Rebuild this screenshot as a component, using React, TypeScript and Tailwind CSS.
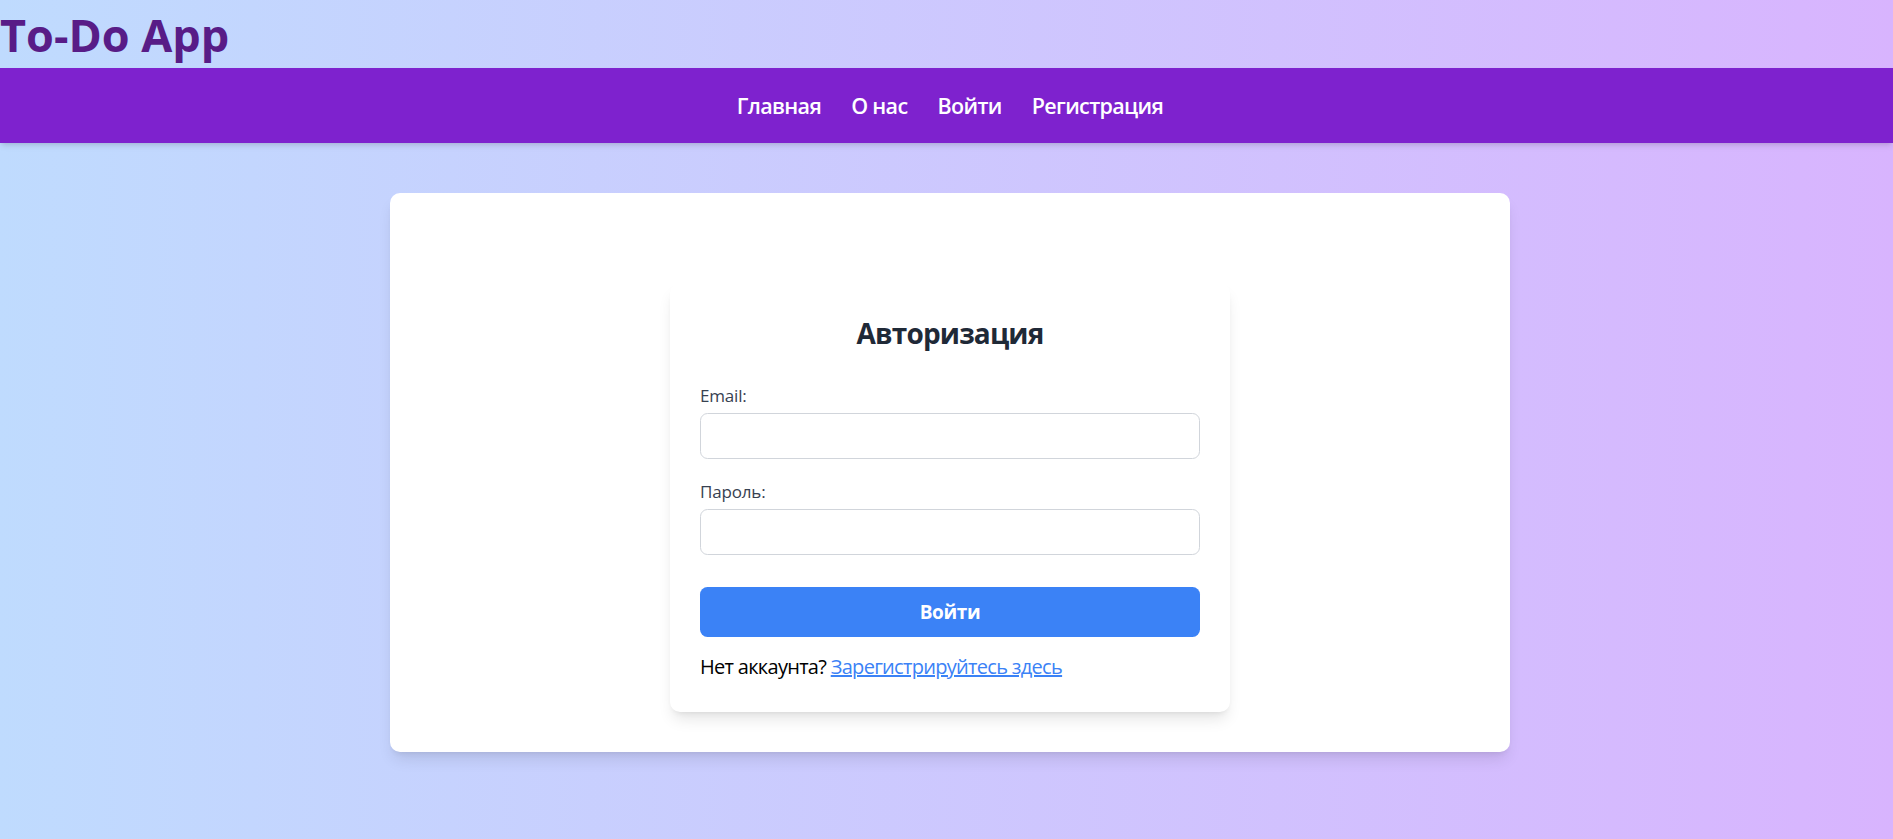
import React from 'react';

const font = { fontFamily: '"Open Sans", "Noto Sans", sans-serif' };

function NavBar() {
  const links = ['Главная', 'О нас', 'Войти', 'Регистрация'];
  return (
    <nav className="bg-[#7e22ce] shadow-md py-[20px] pl-[7px]">
      <ul className="flex justify-center gap-x-[30px]">
        {links.map((l) => (
          <li key={l}>
            <a href="#" className="text-white font-semibold text-[21.5px] tracking-[-0.03em] leading-[35px]">
              {l}
            </a>
          </li>
        ))}
      </ul>
    </nav>
  );
}

function LoginForm() {
  return (
    <div className="w-[560px] mx-auto bg-white rounded-[10px] shadow-lg p-[30px]">
      <h2 className="text-[28px] tracking-[-0.03em] leading-[40px] font-bold text-[#1f2937] text-center mb-[30px]">Авторизация</h2>
      <form onSubmit={(e) => e.preventDefault()}>
        <div className="mb-[20px]">
          <label className="block text-[17px] tracking-[-0.01em] leading-[25px] font-medium text-[#374151] mb-[5px]">Email:</label>
          <input type="email" className="w-full h-[46px] border border-[#d1d5db] rounded-[7.5px] px-[12px] outline-none" />
        </div>
        <div className="mb-[32px]">
          <label className="block text-[17px] tracking-[-0.01em] leading-[25px] font-medium text-[#374151] mb-[5px]">Пароль:</label>
          <input type="password" className="w-full h-[46px] border border-[#d1d5db] rounded-[7.5px] px-[12px] outline-none" />
        </div>
        <button type="submit" className="w-full bg-[#3b82f6] text-white font-bold text-[19px] tracking-[-0.02em] leading-[30px] py-[10px] rounded-[7.5px]">
          Войти
        </button>
      </form>
      <p className="mt-[15px] text-[20px] tracking-[-0.035em] leading-[30px] text-black">
        Нет аккаунта? <a href="#" className="text-[#3b82f6] underline">Зарегистрируйтесь здесь</a>
      </p>
    </div>
  );
}

export default function App() {
  return (
    <div style={font} className="min-h-screen bg-gradient-to-r from-[#bfdbfe] to-[#d8b4fe]">
      <header>
        <h1 className="h-[68px] pt-[10px] text-[45px] leading-[50px] font-bold text-[#581c87]">To-Do App</h1>
        <NavBar />
      </header>
      <main className="pt-[50px] pb-[87px] pl-[7px]">
        <div className="w-[1120px] mx-auto bg-white rounded-[10px] shadow-lg pt-[90px] pb-[40px]">
          <LoginForm />
        </div>
      </main>
    </div>
  );
}
